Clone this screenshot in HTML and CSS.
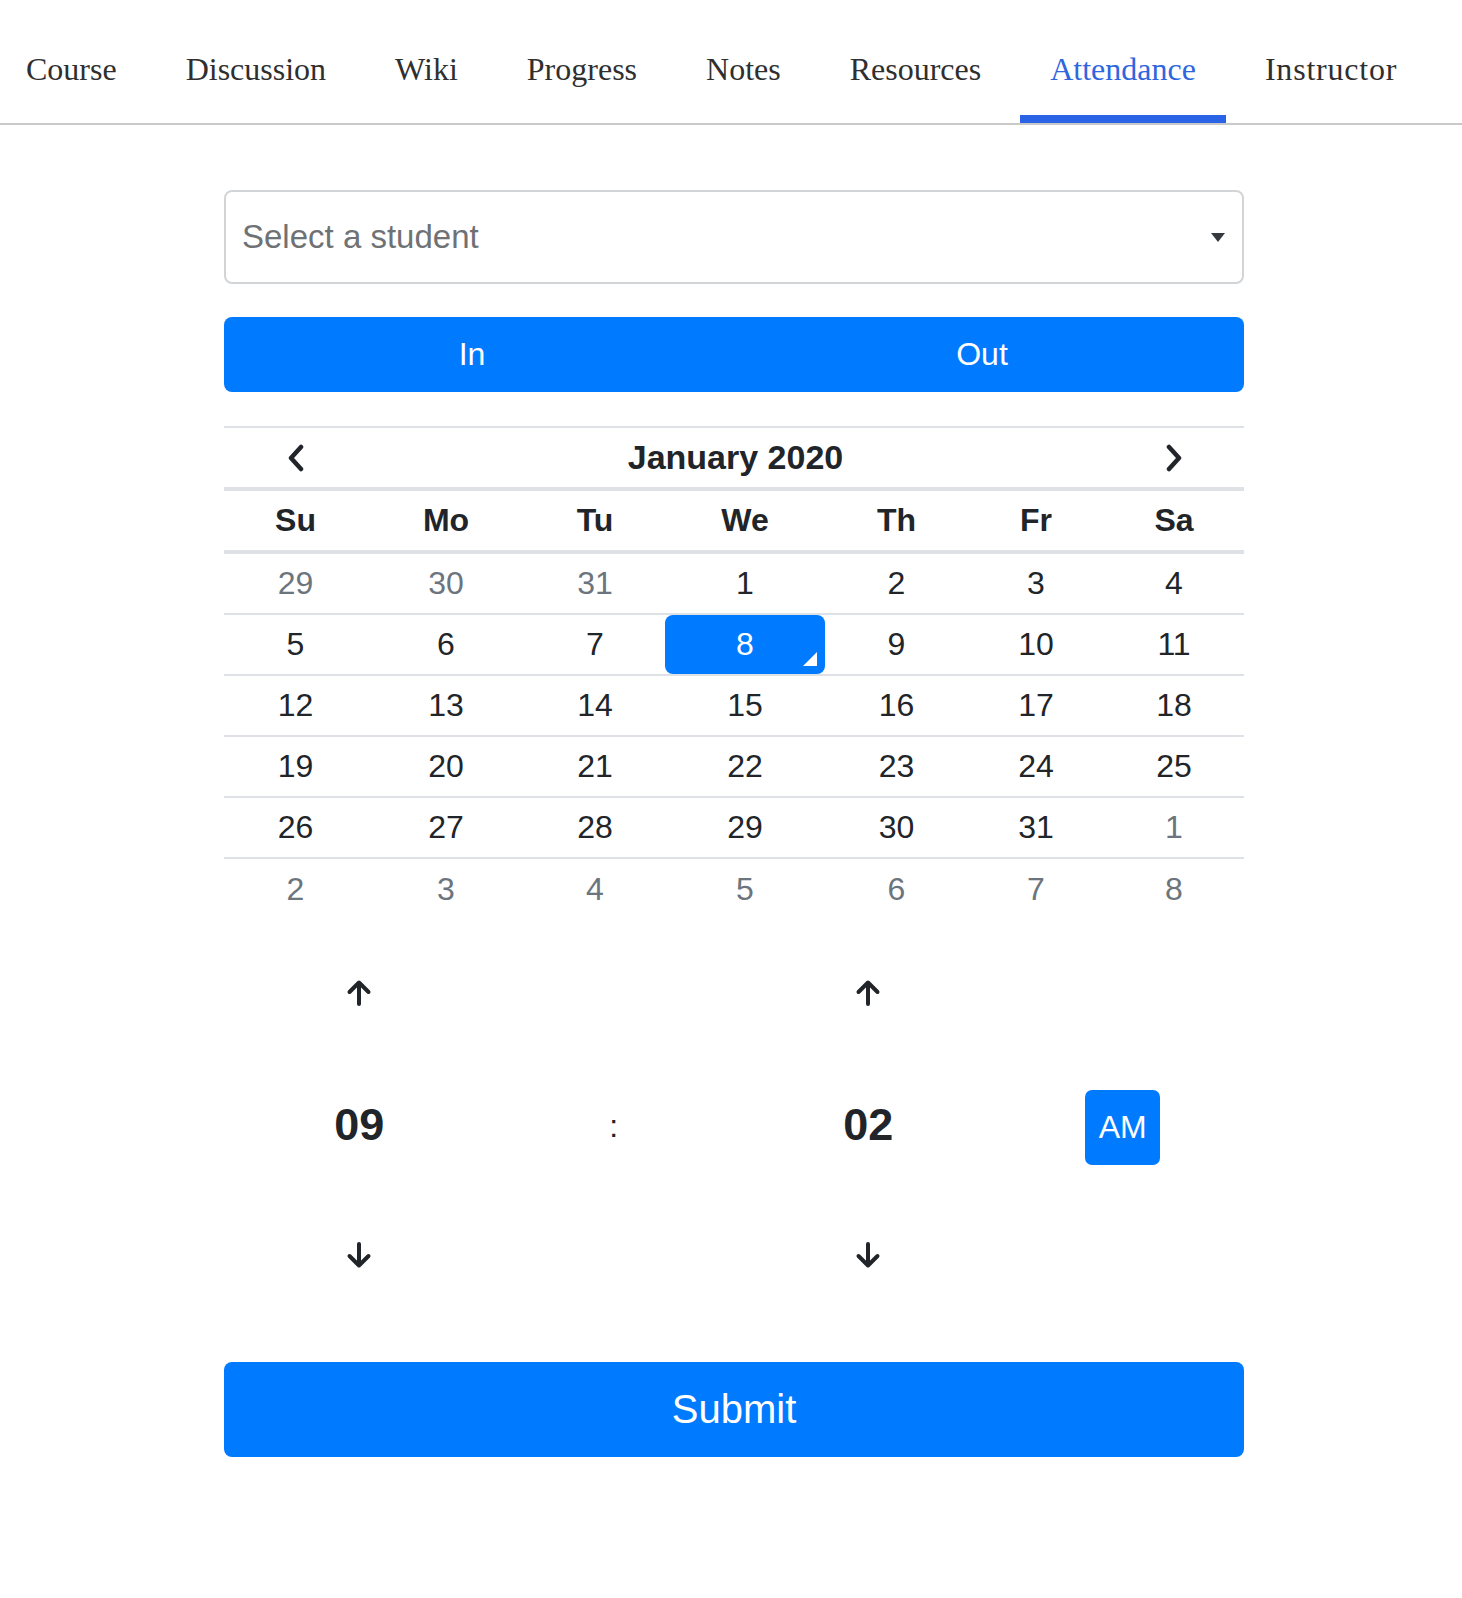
FILE: index.html
```html
<!DOCTYPE html>
<html lang="en">
<head>
<meta charset="utf-8">
<title>Attendance</title>
<link rel="stylesheet" href="styles.css">
</head>
<body>
<nav class="tabs">
  <a class="tab">Course</a>
  <a class="tab">Discussion</a>
  <a class="tab">Wiki</a>
  <a class="tab">Progress</a>
  <a class="tab">Notes</a>
  <a class="tab">Resources</a>
  <a class="tab tab-current">Attendance</a>
  <a class="tab">Instructor</a>
</nav>

<main class="panel">
  <div class="select">
    <span class="placeholder">Select a student</span>
    <span class="caret"></span>
  </div>

  <div class="toggle">
    <button class="toggle-btn">In</button>
    <button class="toggle-btn">Out</button>
  </div>

  <div class="calendar">
    <div class="cal-row cal-head">
      <span class="cell"><svg class="chev" viewBox="0 0 16 28" width="16" height="28"><path d="M13 3L3 14L13 25"/></svg></span>
      <span class="cell month">January 2020</span>
      <span class="cell"><svg class="chev" viewBox="0 0 16 28" width="16" height="28"><path d="M3 3L13 14L3 25"/></svg></span>
    </div>
    <div class="cal-row cal-dow">
      <span class="cell">Su</span><span class="cell">Mo</span><span class="cell">Tu</span><span class="cell">We</span><span class="cell">Th</span><span class="cell">Fr</span><span class="cell">Sa</span>
    </div>
    <div class="cal-row cal-week">
      <span class="cell old">29</span><span class="cell old">30</span><span class="cell old">31</span><span class="cell">1</span><span class="cell">2</span><span class="cell">3</span><span class="cell">4</span>
    </div>
    <div class="cal-row cal-week">
      <span class="cell">5</span><span class="cell">6</span><span class="cell">7</span><span class="cell selected today">8</span><span class="cell">9</span><span class="cell">10</span><span class="cell">11</span>
    </div>
    <div class="cal-row cal-week">
      <span class="cell">12</span><span class="cell">13</span><span class="cell">14</span><span class="cell">15</span><span class="cell">16</span><span class="cell">17</span><span class="cell">18</span>
    </div>
    <div class="cal-row cal-week">
      <span class="cell">19</span><span class="cell">20</span><span class="cell">21</span><span class="cell">22</span><span class="cell">23</span><span class="cell">24</span><span class="cell">25</span>
    </div>
    <div class="cal-row cal-week">
      <span class="cell">26</span><span class="cell">27</span><span class="cell">28</span><span class="cell">29</span><span class="cell">30</span><span class="cell">31</span><span class="cell old">1</span>
    </div>
    <div class="cal-row cal-week">
      <span class="cell old">2</span><span class="cell old">3</span><span class="cell old">4</span><span class="cell old">5</span><span class="cell old">6</span><span class="cell old">7</span><span class="cell old">8</span>
    </div>
  </div>

  <div class="time">
    <span class="t-cell"><svg class="arrow" viewBox="0 0 28 28" width="28" height="28"><path d="M14 25V4M4.5 13L14 3.5L23.5 13"/></svg></span>
    <span class="t-cell"></span>
    <span class="t-cell"><svg class="arrow" viewBox="0 0 28 28" width="28" height="28"><path d="M14 25V4M4.5 13L14 3.5L23.5 13"/></svg></span>
    <span class="t-cell"></span>

    <span class="t-cell digits">09</span>
    <span class="t-cell sep">:</span>
    <span class="t-cell digits">02</span>
    <span class="t-cell"><button class="ampm">AM</button></span>

    <span class="t-cell"><svg class="arrow" viewBox="0 0 28 28" width="28" height="28"><path d="M14 3V24M4.5 15L14 24.5L23.5 15"/></svg></span>
    <span class="t-cell"></span>
    <span class="t-cell"><svg class="arrow" viewBox="0 0 28 28" width="28" height="28"><path d="M14 3V24M4.5 15L14 24.5L23.5 15"/></svg></span>
    <span class="t-cell"></span>
  </div>

  <button class="submit">Submit</button>
</main>
</body>
</html>
```

FILE: styles.css
```css
* {
  box-sizing: border-box;
}

body {
  margin: 0;
  background: #ffffff;
  font-family: "Liberation Sans", Arial, sans-serif;
  color: #212529;
}

/* ---------- tabs ---------- */
.tabs {
  display: flex;
  gap: 9px;
  padding-top: 49px;
  border-bottom: 2px solid #c9c9c9;
}

.tab {
  font-family: "Liberation Serif", "Times New Roman", serif;
  font-size: 32px;
  line-height: 40px;
  color: #2f2f2f;
  padding: 0 30px 26px;
  border-bottom: 8px solid transparent;
  white-space: nowrap;
}

.tab:first-child {
  padding-left: 26px;
}

.tab:last-child {
  letter-spacing: 0.8px;
}

.tab-current {
  color: #2f66de;
  border-bottom-color: #2b63e6;
}

/* ---------- panel ---------- */
.panel {
  width: 1020px;
  margin: 65px 0 0 224px;
  padding-bottom: 140px;
}

.select {
  height: 94px;
  border: 2px solid #d2d5d8;
  border-radius: 8px;
  display: flex;
  align-items: center;
  justify-content: space-between;
  padding: 0 17px 0 16px;
  font-size: 33px;
}

.placeholder {
  color: #6f7275;
}

.caret {
  width: 0;
  height: 0;
  border-left: 7px solid transparent;
  border-right: 7px solid transparent;
  border-top: 9px solid #343a40;
}

.toggle {
  margin-top: 33px;
  height: 75px;
  display: flex;
  background: #007bff;
  border-radius: 8px;
  overflow: hidden;
}

.toggle-btn {
  flex: 1;
  background: transparent;
  border: 0;
  color: #ffffff;
  font-family: "Liberation Sans", Arial, sans-serif;
  font-size: 32px;
  padding: 0 14px 0 0;
}

/* ---------- calendar ---------- */
.calendar {
  margin-top: 34px;
}

.cal-row {
  display: grid;
  grid-template-columns: 143px 158px 140px 160px 143px 136px 140px;
  font-size: 32px;
}

.cell {
  display: flex;
  align-items: center;
  justify-content: center;
  height: 100%;
}

.cal-head {
  height: 65px;
  border-top: 2px solid #dee2e6;
  border-bottom: 4px solid #dee2e6;
}

.month {
  grid-column: 2 / 7;
  font-weight: bold;
  font-size: 34px;
}

.chev {
  fill: none;
  stroke: #212529;
  stroke-width: 4.5;
  stroke-linecap: round;
  stroke-linejoin: round;
}

.cal-dow {
  height: 63px;
  border-bottom: 4px solid #dee2e6;
  font-weight: bold;
}

.cal-week {
  height: 61px;
  border-bottom: 2px solid #dee2e6;
}

.cal-week:last-child {
  border-bottom: 0;
}

.old {
  color: #6c757d;
}

.selected {
  background: #007bff;
  color: #ffffff;
  border-radius: 8px;
  position: relative;
}

.today::before {
  content: "";
  position: absolute;
  right: 8px;
  bottom: 8px;
  border-left: 14px solid transparent;
  border-bottom: 14px solid #ffffff;
}

/* ---------- time ---------- */
.time {
  display: grid;
  grid-template-columns: repeat(4, 254.5px);
  grid-template-rows: repeat(3, 131px);
  margin: 7px 0 0 8px;
}

.t-cell {
  display: flex;
  align-items: center;
  justify-content: center;
}

.arrow {
  fill: none;
  stroke: #212529;
  stroke-width: 4;
  stroke-linecap: round;
  stroke-linejoin: round;
}

.digits {
  font-size: 45px;
  font-weight: bold;
  padding-top: 2px;
}

.sep {
  font-size: 32px;
  padding-top: 6px;
}

.ampm {
  width: 75px;
  height: 75px;
  margin-top: 7px;
  border: 0;
  border-radius: 7px;
  background: #007bff;
  color: #ffffff;
  font-family: "Liberation Sans", Arial, sans-serif;
  font-size: 32px;
  padding: 0;
}

/* ---------- submit ---------- */
.submit {
  display: block;
  width: 100%;
  height: 95px;
  margin-top: 42px;
  border: 0;
  border-radius: 8px;
  background: #007bff;
  color: #ffffff;
  font-family: "Liberation Sans", Arial, sans-serif;
  font-size: 40px;
}
```
